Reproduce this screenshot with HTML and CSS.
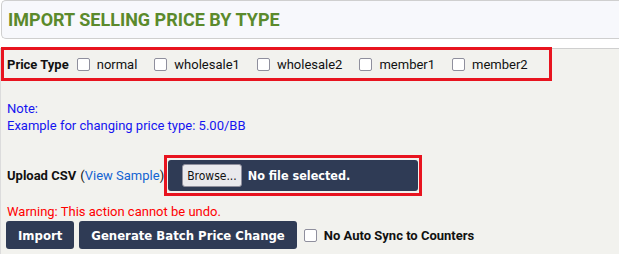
FILE: index.html
```html
<!DOCTYPE html>
<html lang="en">
<head>
    <meta charset="UTF-8">
    <meta name="viewport" content="width=device-width, initial-scale=1.0">
    <title>Import Selling Price By Type</title>
    <link rel="stylesheet" href="styles.css">
</head>
<body>
    <div class="page-header">
        <h3>IMPORT SELLING PRICE BY TYPE</h3>
    </div>

    <div class="panel">
        <div class="price-type highlight">
            <label class="field-label">Price Type</label>
            <label class="check"><span class="box"></span>normal</label>
            <label class="check"><span class="box"></span>wholesale1</label>
            <label class="check"><span class="box"></span>wholesale2</label>
            <label class="check"><span class="box"></span>member1</label>
            <label class="check"><span class="box"></span>member2</label>
        </div>

        <p class="note">Note:<br>Example for changing price type: 5.00/BB</p>

        <div class="upload-row">
            <label class="field-label">Upload CSV</label>
            <span class="sample">(<a href="#">View Sample</a>)</span>
            <div class="highlight file-wrap">
                <div class="file-input">
                    <button class="browse">Browse...</button>
                    <span class="file-name">No file selected.</span>
                </div>
            </div>
        </div>

        <p class="warning">Warning: This action cannot be undo.</p>

        <div class="actions">
            <button class="btn">Import</button>
            <button class="btn">Generate Batch Price Change</button>
            <label class="check bold"><span class="box"></span>No Auto Sync to Counters</label>
        </div>
    </div>
</body>
</html>
```

FILE: styles.css
```css
/* General */
body {
    font-family: Roboto, "Liberation Sans", Arial, sans-serif;
    font-size: 13px;
    color: #111;
    background: #fff;
    margin: 0;
}

.page-header {
    margin: 0 0 0 1px;
    height: 37px;
    background: #f7f8fc;
    border: 1px solid #cfcfcf;
    border-right: none;
    border-radius: 5px 0 0 5px;
    display: flex;
    align-items: center;
    padding-left: 6px;
}

.page-header h3 {
    margin: 0;
    font-size: 18px;
    font-weight: bold;
    color: #5b8a2c;
}

.panel {
    margin-top: 9px;
    background: #f2f2ee;
    border-top: 1px solid #cfcfcf;
    border-left: 1px solid #dcdcdc;
    height: 205px;
}

.highlight {
    border: 3px solid #e8141f;
}

/* Price type row */
.price-type {
    display: flex;
    align-items: center;
    width: 542px;
    height: 28px;
    margin: -2px 0 0 0;
    padding-left: 3px;
}

.field-label {
    font-weight: bold;
    margin-right: 8px;
}

.check {
    display: flex;
    align-items: center;
    margin-right: 17px;
}

.check .box {
    width: 11px;
    height: 11px;
    border: 1px solid #8f8f9d;
    border-radius: 2px;
    background: #fff;
    margin-right: 7px;
}

.note {
    color: #1515f0;
    margin: 19px 0 0 6px;
    line-height: 17px;
}

/* Upload */
.upload-row {
    display: flex;
    align-items: center;
    margin-top: 21px;
    padding-left: 6px;
}

.upload-row .field-label {
    margin-right: 4px;
}

.sample a {
    color: #1464d2;
    text-decoration: none;
}

.file-wrap {
    margin-left: 0;
    padding: 2px 1px;
}

.file-input {
    width: 236px;
    height: 31px;
    background: #2f3b55;
    border-radius: 3px;
    display: flex;
    align-items: center;
    padding-left: 14px;
}

.browse {
    font-family: "DejaVu Sans Condensed", "DejaVu Sans", sans-serif;
    font-size: 12px;
    height: 23px;
    padding: 0 4px;
    background: #e9e9ed;
    border: 1px solid #8f8f9d;
    border-radius: 3px;
    color: #111;
}

.file-name {
    font-family: "DejaVu Sans Condensed", "DejaVu Sans", sans-serif;
    font-weight: bold;
    font-size: 12.5px;
    color: #fff;
    margin-left: 6px;
}

.warning {
    color: #f00;
    margin: 8px 0 0 6px;
}

/* Buttons */
.actions {
    display: flex;
    align-items: center;
    margin-top: 2px;
    padding-left: 5px;
}

.btn {
    font-family: "DejaVu Sans Condensed", "DejaVu Sans", sans-serif;
    font-weight: bold;
    font-size: 13px;
    height: 28px;
    padding: 0 12px;
    margin-right: 5px;
    background: #2f3b55;
    color: #fff;
    border: none;
    border-radius: 3px;
}

.actions .check {
    margin-left: 2px;
}

.bold {
    font-weight: bold;
}
```
